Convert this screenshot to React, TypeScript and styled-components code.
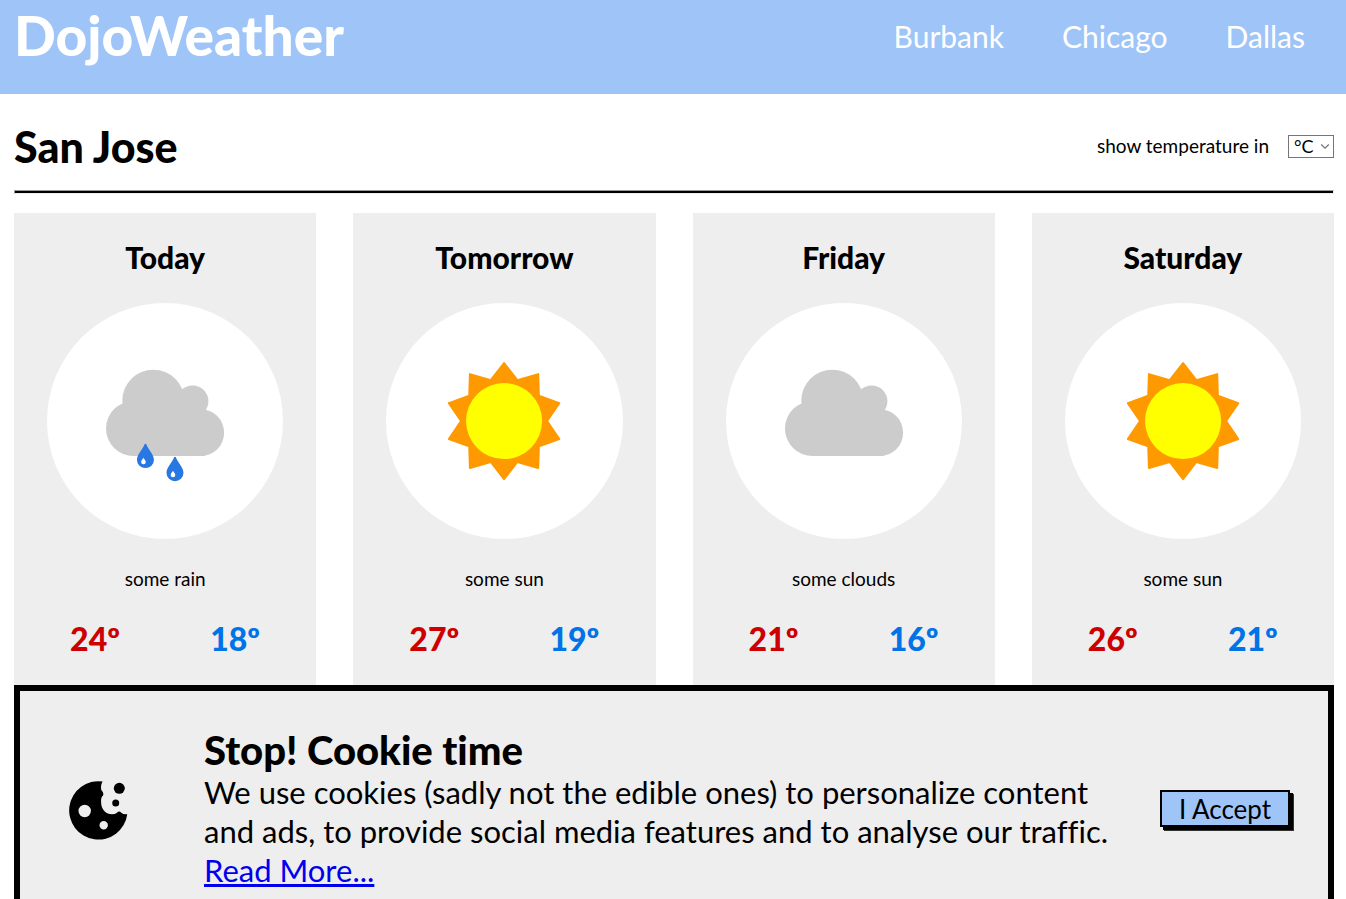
import { useState } from "react";
import styled, { createGlobalStyle } from "styled-components";

const GlobalStyle = createGlobalStyle`
  *, *::before, *::after { box-sizing: border-box; }
  body {
    margin: 0;
    background: #fff;
    color: #000;
    font-family: "Gill Sans MT", Lato, "Liberation Sans", sans-serif;
    font-size: 19px;
    line-height: 24px;
    font-variant-ligatures: no-common-ligatures;
  }
`;

const Header = styled.header`
  display: flex;
  justify-content: space-between;
  align-items: flex-start;
  min-height: 94px;
  padding: 0 41px 0 14px;
  background: #9fc5f8;
  color: #fff;
`;

const Brand = styled.h1`
  margin: 0;
  padding-top: 7px;
  font-size: 55px;
  line-height: 56px;
  font-weight: 900;
`;

const Nav = styled.nav`
  display: flex;
  gap: 58px;
  padding-top: 16px;
`;

const NavLink = styled.a`
  color: inherit;
  font-size: 30px;
  line-height: 40px;
  text-decoration: none;
`;

const Main = styled.main`
  padding: 28px 12px 0 14px;
`;

const CityBar = styled.div`
  display: flex;
  justify-content: space-between;
  align-items: center;
`;

const City = styled.h2`
  margin: 0;
  font-size: 43px;
  line-height: 50px;
  font-weight: 900;
`;

const UnitPicker = styled.div`
  display: flex;
  align-items: center;
  gap: 19px;
  padding-bottom: 2px;
`;

const SelectWrap = styled.span`
  position: relative;
  display: flex;
`;

const Select = styled.select`
  appearance: none;
  width: 46px;
  height: 23px;
  padding: 0 0 0 5px;
  border: 1px solid #767676;
  border-radius: 0;
  background: #fff;
  color: #000;
  font: inherit;
  font-size: 18px;
  line-height: 20px;
`;

const Chevron = styled.svg`
  position: absolute;
  right: 4px;
  top: 8px;
  pointer-events: none;
`;

const Rule = styled.hr`
  height: 4px;
  margin: 18px 0 19px;
  border: 1px inset #eee;
  background: #000;
`;

const Forecast = styled.section`
  display: grid;
  grid-template-columns: repeat(4, 1fr);
  gap: 37px;
`;

const Card = styled.article`
  display: flex;
  flex-direction: column;
  align-items: center;
  padding: 26px 33px 26px;
  background: #eee;
`;

const Day = styled.h3`
  margin: 0;
  font-size: 30px;
  line-height: 36px;
  font-weight: 900;
`;

const Disc = styled.div`
  display: flex;
  align-items: center;
  justify-content: center;
  width: 100%;
  aspect-ratio: 1;
  margin: 28px 0 28px;
  border-radius: 50%;
  background: #fff;

  svg {
    width: 50%;
    height: 50%;
    overflow: visible;
  }
`;

const Description = styled.p`
  margin: 0;
`;

const Temps = styled.div`
  display: flex;
  justify-content: space-around;
  align-self: stretch;
  margin: 28px -22px 0;
`;

const Temp = styled.span<{ $kind: "high" | "low" }>`
  color: ${({ $kind }) => ($kind === "high" ? "#cc0000" : "#0073e6")};
  font-size: 32px;
  line-height: 40px;
  font-weight: 900;
`;

const Banner = styled.aside`
  display: flex;
  align-items: center;
  padding: 36px 35px 36px 49px;
  border: 6px solid #000;
  background: #eee;
`;

const CookieIcon = styled.svg`
  flex: none;
  width: 60px;
  height: 60px;
  margin-top: 4px;
`;

const BannerText = styled.div`
  flex: 1;
  padding: 0 44px 0 75px;
  font-size: 31px;
  line-height: 39px;
`;

const BannerTitle = styled.h2`
  margin: 0;
  font-size: 40px;
  line-height: 46px;
  font-weight: 900;
`;

const BannerCopy = styled.p`
  margin: 0;
`;

const ReadMore = styled.a`
  color: #0000ee;
`;

const Accept = styled.button`
  flex: none;
  width: 130px;
  height: 37px;
  margin-right: 3px;
  padding: 0;
  border: 2px solid #000;
  border-radius: 0;
  background: #9fc5f8;
  box-shadow: 3px 3px 0 #000, 4px 4px 0 #333;
  color: #000;
  font: inherit;
  font-size: 26px;
  line-height: 32px;
`;

const SUN_POINTS = Array.from({ length: 20 }, (_, i) => {
  const radius = i % 2 === 0 ? 58 : 43;
  const angle = (i * Math.PI) / 10;
  return `${(59 + radius * Math.sin(angle)).toFixed(2)},${(59 - radius * Math.cos(angle)).toFixed(2)}`;
}).join(" ");

function Sun() {
  return (
    <svg viewBox="0 0 118 118" aria-hidden="true">
      <polygon points={SUN_POINTS} fill="#ff9900" stroke="#ff9900" strokeWidth="2" strokeLinejoin="round" />
      <circle cx="59" cy="59" r="38" fill="#ffff00" />
    </svg>
  );
}

function Drop({ x, y }: { x: number; y: number }) {
  return (
    <g transform={`translate(${x} ${y})`}>
      <path d="M0 0c1 0 1 .9 1.500 2C3.800 7 8.500 11 8.500 16a8.500 8.300 0 0 1-17 0C-8.500 11-3.800 7-1.500 2-1 .9-1 0 0 0z" fill="#2878e4" />
      <path d="M-2 14c.6 1.500 2.300 2.500 2.300 4.300a2.300 2.200 0 0 1-4.600 0C-4.300 16.500-2.600 15.500-2 14z" fill="#fff" />
    </g>
  );
}

function Cloud({ rain = false }: { rain?: boolean }) {
  return (
    <svg viewBox="0 0 118 118" aria-hidden="true">
      <g fill="#cccccc">
        <circle cx="27.5" cy="66.5" r="27.5" />
        <circle cx="47.3" cy="38.7" r="31" />
        <circle cx="86.5" cy="39.2" r="15.8" />
        <circle cx="94.6" cy="70.6" r="23.4" />
        <path d="M27.500 94V45L47 38l39.500 1.200L99 50v44z" />
      </g>
      {rain && (
        <>
          <Drop x={39.4} y={81.7} />
          <Drop x={68.9} y={94.7} />
        </>
      )}
    </svg>
  );
}

function Cookie() {
  return (
    <CookieIcon viewBox="0 0 60 60" aria-hidden="true">
      <path
        fillRule="evenodd"
        d="M33.700 .5C32 3 31.700 6 32.300 9q2.800 2.500 1.800 5.500-2.300 1.500-2 6.500C32 28.500 37 33.200 43 33.200q3 0 5-1.500 2-2.200 4.300 0 1.700 1.900 6 1.600A29.200 29.200 0 1 1 33.700 .5zM15.700 23.800a6.200 6.200 0 1 0 0 12.400 6.200 6.200 0 0 0 0-12.400zM34.700 40.100a4.200 4.200 0 1 0 0 8.400 4.200 4.200 0 0 0 0-8.400z"
      />
      <circle cx="50.300" cy="7.300" r="5.500" />
      <circle cx="46.700" cy="22" r="3.500" />
    </CookieIcon>
  );
}

type Weather = "rain" | "sun" | "clouds";

const DAYS: { day: string; weather: Weather; high: number; low: number }[] = [
  { day: "Today", weather: "rain", high: 24, low: 18 },
  { day: "Tomorrow", weather: "sun", high: 27, low: 19 },
  { day: "Friday", weather: "clouds", high: 21, low: 16 },
  { day: "Saturday", weather: "sun", high: 26, low: 21 },
];

export default function App() {
  const [unit, setUnit] = useState("C");
  const [accepted, setAccepted] = useState(false);
  const show = (celsius: number) => (unit === "C" ? celsius : Math.round((celsius * 9) / 5 + 32));

  return (
    <>
      <GlobalStyle />
      <Header>
        <Brand>DojoWeather</Brand>
        <Nav>
          <NavLink href="#burbank">Burbank</NavLink>
          <NavLink href="#chicago">Chicago</NavLink>
          <NavLink href="#dallas">Dallas</NavLink>
        </Nav>
      </Header>
      <Main>
        <CityBar>
          <City>San Jose</City>
          <UnitPicker>
            <label htmlFor="unit">show temperature in</label>
            <SelectWrap>
              <Select id="unit" value={unit} onChange={(e) => setUnit(e.target.value)}>
                <option value="C">°C</option>
                <option value="F">°F</option>
              </Select>
              <Chevron width="10" height="7" viewBox="0 0 10 7" aria-hidden="true">
                <path d="M1.200 1.500L5 5.200l3.800-3.700" fill="none" stroke="#767676" strokeWidth="1.300" />
              </Chevron>
            </SelectWrap>
          </UnitPicker>
        </CityBar>
        <Rule />
        <Forecast>
          {DAYS.map(({ day, weather, high, low }) => (
            <Card key={day}>
              <Day>{day}</Day>
              <Disc>{weather === "sun" ? <Sun /> : <Cloud rain={weather === "rain"} />}</Disc>
              <Description>some {weather}</Description>
              <Temps>
                <Temp $kind="high">{show(high)}º</Temp>
                <Temp $kind="low">{show(low)}º</Temp>
              </Temps>
            </Card>
          ))}
        </Forecast>
        {!accepted && (
          <Banner>
            <Cookie />
            <BannerText>
              <BannerTitle>Stop! Cookie time</BannerTitle>
              <BannerCopy>
                We use cookies (sadly not the edible ones) to personalize content and ads, to provide
                social media features and to analyse our traffic.
              </BannerCopy>
              <ReadMore href="#cookies">Read More...</ReadMore>
            </BannerText>
            <Accept type="button" onClick={() => setAccepted(true)}>
              I Accept
            </Accept>
          </Banner>
        )}
      </Main>
    </>
  );
}
